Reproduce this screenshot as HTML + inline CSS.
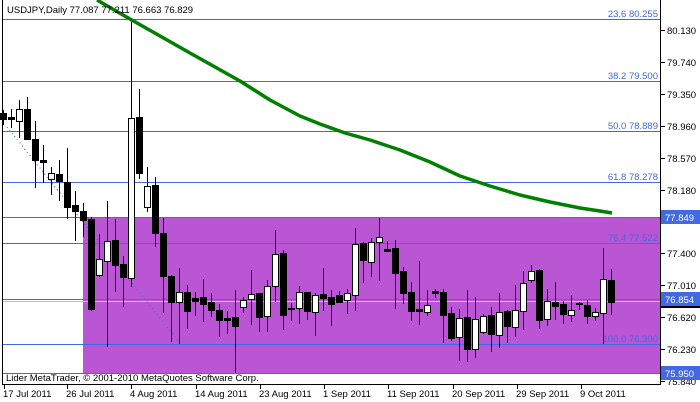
<!DOCTYPE html>
<html><head><meta charset="utf-8"><style>
html,body{margin:0;padding:0;background:#fff;width:700px;height:402px;overflow:hidden}
svg{display:block;font-family:"Liberation Sans",Arial,sans-serif;font-size:9.5px}
</style></head><body>
<svg id="c" width="700" height="402" xmlns="http://www.w3.org/2000/svg" shape-rendering="crispEdges">
<rect x="0" y="0" width="700" height="402" fill="#fff"/>
<rect x="83" y="217" width="577" height="156" fill="#BA55D3"/>
<g stroke="#4169E1" stroke-width="1">
<line x1="2" y1="19.5" x2="660" y2="19.5"/>
<line x1="2" y1="81.5" x2="660" y2="81.5"/>
<line x1="2" y1="131.5" x2="660" y2="131.5"/>
<line x1="2" y1="182.5" x2="660" y2="182.5"/>
<line x1="2" y1="217.5" x2="660" y2="217.5"/>
<line x1="2" y1="243.5" x2="660" y2="243.5"/>
<line x1="2" y1="299.5" x2="660" y2="299.5"/>
<line x1="2" y1="344.5" x2="660" y2="344.5"/>
<line x1="2" y1="373.5" x2="660" y2="373.5"/>
</g>
<line x1="2" y1="301.5" x2="660" y2="301.5" stroke="#C0C0C0"/>
<polyline points="7,127 180,343" stroke="#4169E1" stroke-dasharray="1,3" fill="none"/>
<g id="cand"></g>
<polyline shape-rendering="auto" points="97,0 130,19 160,36 190,53 215,67 240,81 270,100 300,116 320,124 345,133 370,140 400,150 430,162 460,176 490,186 520,195 550,202 580,208 600,211 612,213" stroke="#008000" stroke-width="3.5" fill="none" stroke-linejoin="round"/>
<g fill="#4169E1" text-anchor="end">
<text x="658" y="17">23.6 80.255</text>
<text x="658" y="79">38.2 79.500</text>
<text x="658" y="129">50.0 78.889</text>
<text x="658" y="180">61.8 78.278</text>
<text x="658" y="241">76.4 77.522</text>
<text x="658" y="342">100.0 76.300</text>
</g>
<text x="7" y="13" fill="#000">USDJPY,Daily  77.087 77.211 76.663 76.829</text>
<text x="6" y="381" fill="#000">Lider MetaTrader, © 2001-2010 MetaQuotes Software Corp.</text>
<line x1="2.5" y1="0" x2="2.5" y2="385" stroke="#000"/>
<line x1="2" y1="384.5" x2="661" y2="384.5" stroke="#000"/>
<line x1="660.5" y1="0" x2="660.5" y2="385" stroke="#000"/>
<g id="ax" fill="#000"></g>
</svg>
<script>
var d=[
[110,113,119,125,0],[109,117,119,128,0],[100,109,121,138,1],[97,109,139,139,0],[121,139,160,188,0],[145,160,162,183,0],[167,173,179,195,1],[160,174,181,201,0],[148,182,207,219,0],[191,205,211,241,0],
[203,211,220,237,0],[217,219,309,311,0],[234,259,275,277,1],[201,241,261,347,1],[219,240,265,292,0],[256,264,277,307,0],[19,118,278,287,1],[89,117,173,179,0],[167,186,207,212,1],[177,185,233,247,0],
[218,233,276,313,0],[275,276,302,342,0],[268,292,302,344,1],[285,292,311,329,0],[292,298,301,316,0],[279,297,304,322,0],[293,302,310,317,0],[304,310,320,337,0],[311,318,320,334,0],[290,317,326,373,0],
[297,300,307,313,1],[270,294,299,325,1],[293,293,317,332,0],[280,286,316,332,1],[230,254,286,302,1],[250,253,315,330,0],[303,308,309,321,0],[286,292,308,324,1],[292,292,311,320,0],[293,295,312,336,1],
[268,294,298,311,0],[290,297,304,326,0],[291,295,302,303,0],[289,293,300,314,1],[228,244,295,311,1],[242,243,260,283,0],[238,242,262,277,1],[218,237,242,281,1],[241,249,251,252,0],[240,248,273,309,0],
[267,271,293,304,0],[282,292,311,321,0],[261,309,311,325,0],[290,305,312,316,1],[289,291,293,298,0],[289,292,315,343,0],[307,313,338,341,0],[309,318,337,361,1],[290,317,349,362,0],[297,319,349,358,1],
[314,316,332,334,1],[307,315,334,352,0],[293,312,335,348,1],[310,311,326,343,0],[285,310,327,337,1],[271,283,311,330,1],[265,271,280,283,1],[269,270,320,329,0],[289,301,319,326,1],[282,302,306,320,0],
[301,304,314,324,0],[295,310,315,322,1],[302,303,304,310,0],[300,305,316,324,0],[308,312,316,321,1],[248,279,313,344,1],[269,280,302,315,0]];
var s='';
for(var i=0;i<d.length;i++){var c=d[i],x=3+8*i;
s+='<line x1="'+(x+.5)+'" y1="'+c[0]+'" x2="'+(x+.5)+'" y2="'+c[3]+'" stroke="#000"/>';
var h=Math.max(1,c[2]-c[1]);
s+='<rect x="'+(x-2.5)+'" y="'+(c[1]+.5)+'" width="6" height="'+h+'" fill="'+(c[4]?'#fff':'#000')+'" stroke="#000"/>';}
document.getElementById('cand').innerHTML=s;
var a='',L=[[30,'80.130'],[62,'79.740'],[94,'79.350'],[126,'78.960'],[158,'78.570'],[190,'78.180'],[253,'77.400'],[285,'77.010'],[317,'76.620'],[349,'76.230'],[381,'75.840']];
for(var j=0;j<L.length;j++){a+='<rect x="661" y="'+L[j][0]+'" width="4" height="1"/><text x="667" y="'+(L[j][0]+4)+'">'+L[j][1]+'</text>';}
var B=[[217,'77.849'],[299,'76.854'],[373,'75.950']];
for(j=0;j<B.length;j++){a+='<rect x="661" y="'+(B[j][0]-7)+'" width="39" height="14" fill="#4169E1"/><text x="665" y="'+(B[j][0]+4)+'" fill="#fff">'+B[j][1]+'</text>';}
a+='<rect x="661" y="306" width="39" height="2" fill="#000"/>';
var D=[[4,'17 Jul 2011'],[67,'26 Jul 2011'],[131,'4 Aug 2011'],[196,'14 Aug 2011'],[260,'23 Aug 2011'],[324,'1 Sep 2011'],[388,'11 Sep 2011'],[453,'20 Sep 2011'],[517,'29 Sep 2011'],[581,'9 Oct 2011']];
for(j=0;j<D.length;j++){a+='<rect x="'+D[j][0]+'" y="385" width="1" height="4"/><text x="'+(D[j][0]-1)+'" y="397">'+D[j][1]+'</text>';}
document.getElementById('ax').innerHTML=a;
</script>
</body></html>
